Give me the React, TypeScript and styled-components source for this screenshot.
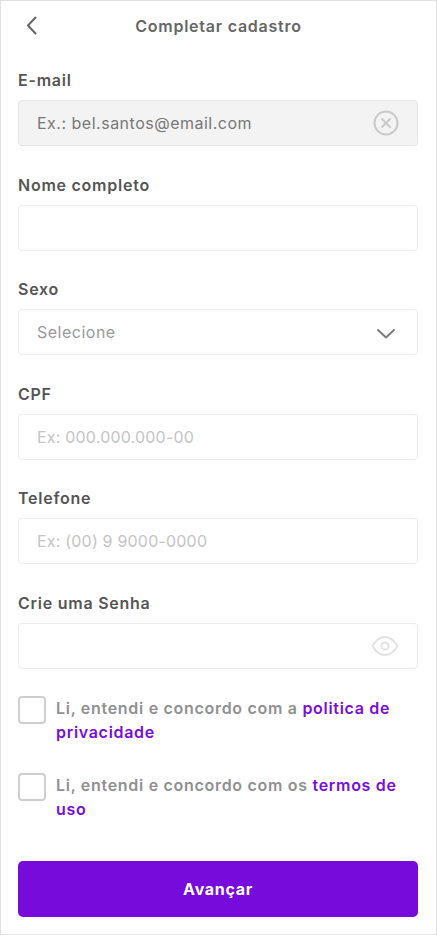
import styled, { createGlobalStyle } from "styled-components"

const GlobalStyle = createGlobalStyle`
  html, body {
    margin: 0;
    padding: 0;
    background: #fff;
  }
  * {
    box-sizing: border-box;
  }
`

const Page = styled.div`
  width: 437px;
  height: 935px;
  border: 1px solid #e2e2e2;
  background: #fff;
  padding: 0 18px 0 17px;
  font-family: "Inter", "Liberation Sans", sans-serif;
  display: flex;
  flex-direction: column;
`

const Header = styled.header`
  height: 49px;
  position: relative;
  display: flex;
  align-items: center;
  justify-content: center;
`

const BackButton = styled.button`
  position: absolute;
  left: 2px;
  top: 12px;
  width: 24px;
  height: 24px;
  border: 0;
  padding: 0;
  background: none;
  color: #666;
`

const Title = styled.h1`
  margin: 0 0 0 1px;
  font-size: 16px;
  font-weight: 600;
  letter-spacing: 0.76px;
  color: #666;
`

const Form = styled.form`
  display: flex;
  flex-direction: column;
  gap: 28.5px;
  margin-top: 20px;
`

const Field = styled.div`
  display: flex;
  flex-direction: column;
  gap: 9px;
`

const Label = styled.label`
  font-size: 16px;
  line-height: 21px;
  height: 21px;
  font-weight: 600;
  letter-spacing: 0.75px;
  color: #555;
`

const InputBox = styled.div<{ $disabled?: boolean }>`
  height: 46px;
  display: flex;
  align-items: center;
  justify-content: space-between;
  padding: 0 18px;
  border: 1px solid ${p => (p.$disabled ? "#e6e6e6" : "#ececec")};
  border-radius: 4px;
  background: ${p => (p.$disabled ? "#f3f3f3" : "#fff")};
`

const Value = styled.span<{ $tone: "dark" | "mid" | "light" }>`
  font-size: 16px;
  letter-spacing: ${p => (p.$tone === "light" ? "0.2px" : "0.5px")};
  color: ${p => (p.$tone === "dark" ? "#777" : p.$tone === "mid" ? "#999" : "#c4c4c4")};
`

const Consents = styled.div`
  display: flex;
  flex-direction: column;
  gap: 28px;
  margin-top: 27px;
`

const Consent = styled.div`
  display: flex;
  gap: 10px;
`

const Checkbox = styled.span`
  flex: none;
  width: 28px;
  height: 28px;
  border: 2px solid #cfcfcf;
  border-radius: 4px;
`

const ConsentText = styled.p`
  margin: 0;
  font-size: 16px;
  line-height: 24.5px;
  font-weight: 600;
  letter-spacing: 0.7px;
  color: #909090;
`

const PolicyLink = styled.a`
  color: #7a0cdc;
`

const Submit = styled.button`
  height: 56px;
  margin-top: 39px;
  border: 0;
  border-radius: 5px;
  background: #760bdc;
  color: #fff;
  font-family: inherit;
  font-size: 16px;
  font-weight: 700;
  letter-spacing: 0.7px;
`

const CloseIcon = () => (
  <svg width="26" height="26" viewBox="0 0 26 26" fill="none" stroke="#c9c9c9">
    <circle cx="13" cy="13" r="11.5" strokeWidth="2" />
    <path d="M9 9l8 8M17 9l-8 8" strokeWidth="2" strokeLinecap="round" />
  </svg>
)

const ChevronDown = () => (
  <svg width="26" height="16" viewBox="0 0 26 16" fill="none" stroke="#7c7c7c" strokeWidth="2" strokeLinecap="round" strokeLinejoin="round">
    <path d="M5 6l8 7.5L21 6" />
  </svg>
)

const EyeIcon = () => (
  <svg width="28" height="22" viewBox="0 0 28 22" fill="none" stroke="#e3e3e3" strokeWidth="2">
    <path d="M1.5 11C5 5 9 2 14 2s9 3 12.5 9C23 17 19 20 14 20S5 17 1.5 11z" strokeLinejoin="round" />
    <circle cx="14" cy="11" r="3.6" />
  </svg>
)

const BackIcon = () => (
  <svg width="24" height="24" viewBox="0 0 24 24" fill="none" stroke="currentColor" strokeWidth="2" strokeLinecap="round" strokeLinejoin="round">
    <path d="M15.5 4.5L8 12.5l7.5 8" />
  </svg>
)

const App = () => {
  return (
    <>
      <GlobalStyle />
      <Page>
        <Header>
          <BackButton type="button" aria-label="Voltar">
            <BackIcon />
          </BackButton>
          <Title>Completar cadastro</Title>
        </Header>
        <Form>
          <Field>
            <Label>E-mail</Label>
            <InputBox $disabled>
              <Value $tone="dark">Ex.: bel.santos@email.com</Value>
              <CloseIcon />
            </InputBox>
          </Field>
          <Field>
            <Label>Nome completo</Label>
            <InputBox />
          </Field>
          <Field>
            <Label>Sexo</Label>
            <InputBox>
              <Value $tone="mid">Selecione</Value>
              <ChevronDown />
            </InputBox>
          </Field>
          <Field>
            <Label>CPF</Label>
            <InputBox>
              <Value $tone="light">Ex: 000.000.000-00</Value>
            </InputBox>
          </Field>
          <Field>
            <Label>Telefone</Label>
            <InputBox>
              <Value $tone="light">Ex: (00) 9 9000-0000</Value>
            </InputBox>
          </Field>
          <Field>
            <Label>Crie uma Senha</Label>
            <InputBox>
              <span />
              <EyeIcon />
            </InputBox>
          </Field>
        </Form>
        <Consents>
          <Consent>
            <Checkbox />
            <ConsentText>
              Li, entendi e concordo com a <PolicyLink>politica de privacidade</PolicyLink>
            </ConsentText>
          </Consent>
          <Consent>
            <Checkbox />
            <ConsentText>
              Li, entendi e concordo com os <PolicyLink>termos de uso</PolicyLink>
            </ConsentText>
          </Consent>
        </Consents>
        <Submit type="button">Avançar</Submit>
      </Page>
    </>
  )
}

export default App
